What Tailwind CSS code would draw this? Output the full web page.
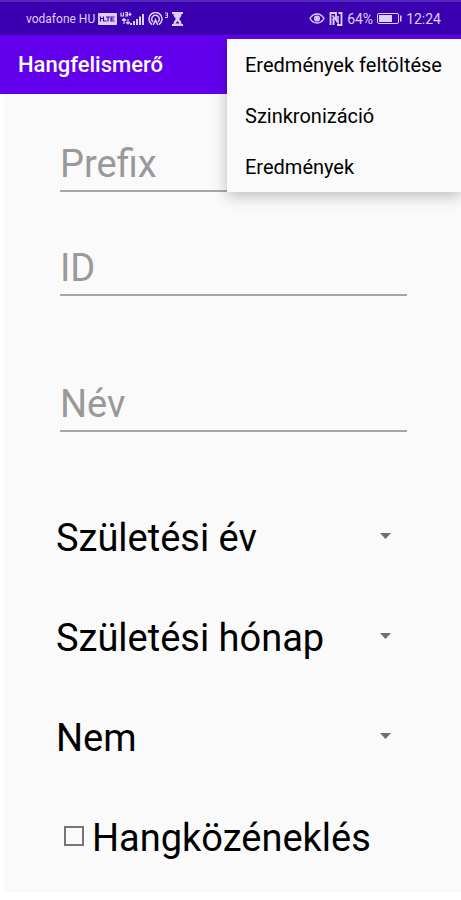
<!DOCTYPE html>
<html lang="hu">
<head>
    <meta charset="UTF-8">
    <meta name="viewport" content="width=device-width, initial-scale=1.0">
    <title>Hangfelismerő</title>
    <script src="https://cdn.jsdelivr.net/npm/@tailwindcss/browser@4"></script>
</head>
<body class="bg-white font-[Roboto,sans-serif] text-black">
    <!-- Status bar -->
    <div class="flex h-[35px] items-center justify-between border-t-2 border-[#5526bb] bg-[#3a00b0] pl-[26px] pr-5 text-[#ddd0f8]">
        <div class="flex items-center gap-[3px]">
            <span class="text-xs">vodafone HU</span>
            <svg class="h-3 w-[19px]" viewBox="0 0 19 12" aria-hidden="true">
                <rect width="19" height="12" rx="1" fill="currentColor"/>
                <path d="M2.500 3.500v5M2.500 5.500h2.500M5.500 3.500v4.500h3M8 4h4M10 4v4.500M16.500 4H13v4h3.500M13 6h3" fill="none" stroke="#3a00b0" stroke-width="1.200"/>
            </svg>
            <svg class="h-[14px] w-[25px]" viewBox="0 0 25 14" fill="none" stroke="currentColor" aria-hidden="true">
                <path d="M1 .5v3.500h2.500V.5M5 .5h2.500v1.800H5.500M5 4h2.500V2.300M10 .5v3.500M8.500 2.300h3" stroke-width="1.200"/>
                <path d="M4 12V6.500M2 8.500l2-2 2 2M8 7v5M6 10l2 2 2-2" stroke-width="1.200"/>
                <path d="M11 13v-2M14 13V9M17 13V7M20 13V4.500M23 13V2" stroke-width="2"/>
            </svg>
            <svg class="h-[14px] w-[21px]" viewBox="0 0 21 14" fill="none" stroke="currentColor" aria-hidden="true">
                <path d="M4 12.500a6.500 6.500 0 1 1 7 0M5 10a3.800 3.800 0 1 1 5 0" stroke-width="1.500"/>
                <path d="M7.500 6l-3 7h1.500l1.500-3 1.500 3h1.500z" fill="currentColor" stroke="none"/>
                <path d="M17 1h2.500v4.500H17M17.500 3.200h2"/>
            </svg>
            <svg class="h-[14px] w-[11px]" viewBox="0 0 11 14" fill="currentColor" aria-hidden="true">
                <path d="M0 0h11v2H9.500c0 2.500-1.500 4-2.500 5 1 1 2.500 2.500 2.500 5H11v2H0v-2h1.500c0-2.500 1.500-4 2.500-5-1-1-2.500-2.500-2.500-5H0z"/>
                <path d="M3.500 11.500L5.500 9l2 2.500z" fill="#3a00b0"/>
            </svg>
        </div>
        <div class="flex items-center gap-1">
            <svg class="h-[11px] w-4" viewBox="0 0 16 11" fill="none" stroke="currentColor" stroke-width="1.400" aria-hidden="true">
                <path d="M1 5.500C4.500-.5 11.500-.5 15 5.500 11.500 11.500 4.500 11.500 1 5.500z"/>
                <circle cx="8" cy="5.500" r="2.400"/>
                <circle cx="8" cy="5.500" r="1" fill="currentColor"/>
            </svg>
            <svg class="h-[14px] w-[14px]" viewBox="0 0 14 14" fill="none" stroke="currentColor" aria-hidden="true">
                <path d="M1.500 13V1H7v7" stroke-width="1.800"/>
                <path d="M3.500 3.500L9 10.500V4" stroke-width="1.500"/>
                <path d="M4.500 6v7" stroke-width="2"/>
                <path d="M9.500 1h3v12H8" stroke-width="1.800"/>
            </svg>
            <span class="text-sm">64%</span>
            <svg class="h-[11px] w-[25px]" viewBox="0 0 25 11" aria-hidden="true">
                <rect x=".5" y=".5" width="21" height="10" rx="1.500" fill="none" stroke="currentColor"/>
                <rect x="2" y="2" width="13" height="7" fill="currentColor"/>
                <path d="M23 2.500h1.500v6H23z" fill="currentColor"/>
            </svg>
            <span class="text-sm">12:24</span>
        </div>
    </div>

    <!-- App bar with open overflow menu -->
    <header class="relative flex h-[59px] items-center bg-[#6200ee] px-[18px]">
        <h1 class="text-[22px] font-medium text-white">Hangfelismerő</h1>
        <nav class="absolute right-0 top-1 flex w-[234px] flex-col bg-[#fafafa] text-xl shadow-[0_4px_14px_rgba(0,0,0,0.25)]">
            <a href="#" class="flex h-[51px] items-center whitespace-nowrap px-[18px]">Eredmények feltöltése</a>
            <a href="#" class="flex h-[51px] items-center whitespace-nowrap px-[18px]">Szinkronizáció</a>
            <a href="#" class="flex h-[51px] items-center whitespace-nowrap px-[18px]">Eredmények</a>
        </nav>
    </header>

    <main class="mb-2 ml-1 bg-[#fafafa] pb-1 pl-[52px] pr-[54px] pt-[47px] text-[38px]">
        <form>
            <div class="flex flex-col pl-1">
                <input type="text" aria-label="Prefix" placeholder="Prefix" class="mb-[53px] h-[51px] border-b-2 border-[#a6a6a6] pb-0.5 outline-none placeholder:text-[#999999]">
                <input type="text" aria-label="ID" placeholder="ID" class="mb-[85px] h-[51px] border-b-2 border-[#a6a6a6] pb-0.5 outline-none placeholder:text-[#999999]">
                <input type="text" aria-label="Név" placeholder="Név" class="mb-14 h-[51px] border-b-2 border-[#a6a6a6] pb-0.5 outline-none placeholder:text-[#999999]">
            </div>

            <div class="grid h-[100px] items-center">
                <select aria-label="Születési év" class="col-start-1 row-start-1 appearance-none outline-none">
                    <option>Születési év</option>
                </select>
                <svg class="pointer-events-none col-start-1 row-start-1 mb-1 mr-4 h-[6px] w-[11px] justify-self-end" viewBox="0 0 11 6" aria-hidden="true"><path d="M0 0h11L5.500 6z" fill="#6f6f6f"/></svg>
            </div>
            <div class="grid h-[100px] items-center">
                <select aria-label="Születési hónap" class="col-start-1 row-start-1 appearance-none outline-none">
                    <option>Születési hónap</option>
                </select>
                <svg class="pointer-events-none col-start-1 row-start-1 mb-1 mr-4 h-[6px] w-[11px] justify-self-end" viewBox="0 0 11 6" aria-hidden="true"><path d="M0 0h11L5.500 6z" fill="#6f6f6f"/></svg>
            </div>
            <div class="grid h-[100px] items-center">
                <select aria-label="Nem" class="col-start-1 row-start-1 appearance-none outline-none">
                    <option>Nem</option>
                </select>
                <svg class="pointer-events-none col-start-1 row-start-1 mb-1 mr-4 h-[6px] w-[11px] justify-self-end" viewBox="0 0 11 6" aria-hidden="true"><path d="M0 0h11L5.500 6z" fill="#6f6f6f"/></svg>
            </div>

            <label class="flex h-[100px] items-center gap-2 pl-2">
                <input type="checkbox" class="mb-1 size-5 appearance-none border-2 border-[#757575] checked:bg-[#6200ee]">
                <span>Hangközéneklés</span>
            </label>
        </form>
    </main>
</body>
</html>
